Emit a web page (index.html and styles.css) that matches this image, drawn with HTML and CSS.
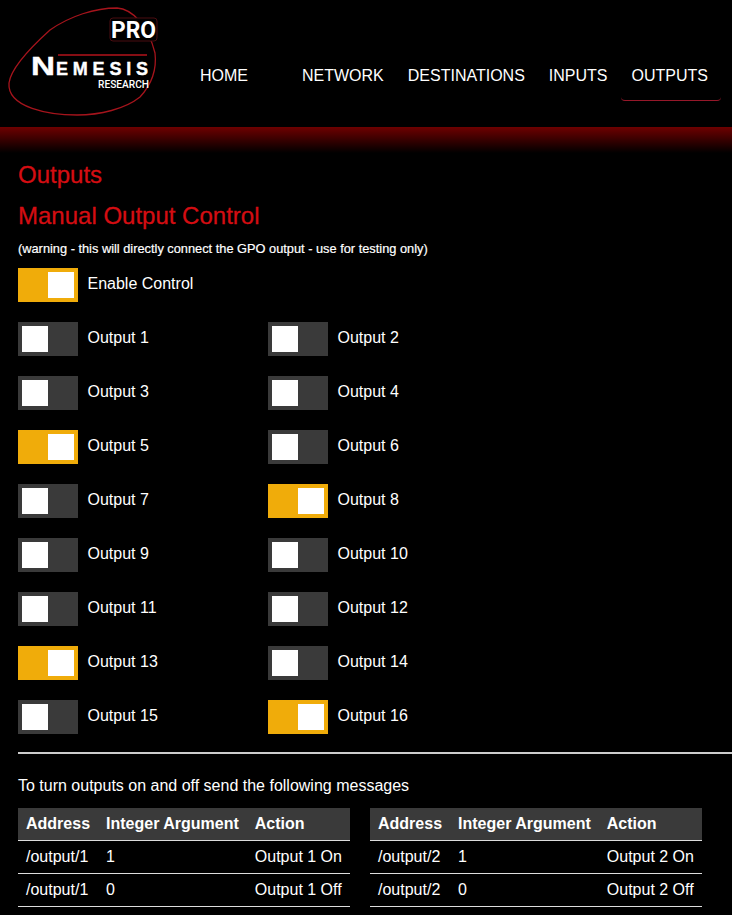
FILE: index.html
```html
<html lang="en">
  <head>
    <meta charset="UTF-8" />
    <meta name="viewport" content="width=device-width, initial-scale=1.0" />
    <title>Outputs</title>
    <link rel="stylesheet" href="styles.css">
  </head>
  <body>
    <header class="header">
      <svg class="logo" width="170" height="125" viewBox="0 0 170 125">
        <path class="logo-blob" d="M9 83C11 68 30 48 50 30C70 16 95 8 117 8C132 9 148 25 155 53C157 70 151 85 140 97C125 109 100 115 77 115C50 115 7 108 9 83Z" />
        <rect class="logo-pro-box" x="110" y="18" width="47" height="23" rx="3" />
        <text class="logo-pro" x="111" y="38" textLength="45" lengthAdjust="spacingAndGlyphs">PRO</text>
        <line class="logo-rule" x1="58" y1="55" x2="147" y2="55" />
        <text class="logo-name logo-name-cap" x="31" y="75" textLength="24" lengthAdjust="spacingAndGlyphs">N</text>
        <text class="logo-name" x="56" y="75" textLength="92">EMESIS</text>
        <text class="logo-sub" x="98" y="88" textLength="51" lengthAdjust="spacingAndGlyphs">RESEARCH</text>
      </svg>
      <nav class="nav">
        <a class="nav-item nav-home">HOME</a>
        <a class="nav-item">NETWORK</a>
        <a class="nav-item">DESTINATIONS</a>
        <a class="nav-item">INPUTS</a>
        <a class="nav-item nav-active">OUTPUTS</a>
      </nav>
    </header>
    <div class="banner"></div>
    <main class="content">
      <h2 class="title">Outputs</h2>
      <h2 class="title subtitle">Manual Output Control</h2>
      <p class="warning">(warning - this will directly connect the GPO output - use for testing only)</p>
      <div class="control enable">
        <span class="switch on"><span class="knob"></span></span>
        <span class="label">Enable Control</span>
      </div>
      <div class="outputs">
        <div class="control"><span class="switch"><span class="knob"></span></span><span class="label">Output 1</span></div>
        <div class="control"><span class="switch"><span class="knob"></span></span><span class="label">Output 2</span></div>
        <div class="control"><span class="switch"><span class="knob"></span></span><span class="label">Output 3</span></div>
        <div class="control"><span class="switch"><span class="knob"></span></span><span class="label">Output 4</span></div>
        <div class="control"><span class="switch on"><span class="knob"></span></span><span class="label">Output 5</span></div>
        <div class="control"><span class="switch"><span class="knob"></span></span><span class="label">Output 6</span></div>
        <div class="control"><span class="switch"><span class="knob"></span></span><span class="label">Output 7</span></div>
        <div class="control"><span class="switch on"><span class="knob"></span></span><span class="label">Output 8</span></div>
        <div class="control"><span class="switch"><span class="knob"></span></span><span class="label">Output 9</span></div>
        <div class="control"><span class="switch"><span class="knob"></span></span><span class="label">Output 10</span></div>
        <div class="control"><span class="switch"><span class="knob"></span></span><span class="label">Output 11</span></div>
        <div class="control"><span class="switch"><span class="knob"></span></span><span class="label">Output 12</span></div>
        <div class="control"><span class="switch on"><span class="knob"></span></span><span class="label">Output 13</span></div>
        <div class="control"><span class="switch"><span class="knob"></span></span><span class="label">Output 14</span></div>
        <div class="control"><span class="switch"><span class="knob"></span></span><span class="label">Output 15</span></div>
        <div class="control"><span class="switch on"><span class="knob"></span></span><span class="label">Output 16</span></div>
      </div>
      <hr class="divider" />
      <p class="intro">To turn outputs on and off send the following messages</p>
      <div class="tables">
        <table class="messages">
          <tr><th>Address</th><th>Integer Argument</th><th>Action</th></tr>
          <tr><td>/output/1</td><td>1</td><td>Output 1 On</td></tr>
          <tr><td>/output/1</td><td>0</td><td>Output 1 Off</td></tr>
        </table>
        <table class="messages">
          <tr><th>Address</th><th>Integer Argument</th><th>Action</th></tr>
          <tr><td>/output/2</td><td>1</td><td>Output 2 On</td></tr>
          <tr><td>/output/2</td><td>0</td><td>Output 2 Off</td></tr>
        </table>
      </div>
    </main>
  </body>
</html>
```

FILE: styles.css
```css
html,
body {
  height: 915px;
  overflow: hidden;
}

body {
  margin: 0;
  background-color: #000;
  color: #fff;
  font-family: "Liberation Sans", Arial, sans-serif;
  font-size: 16px;
}

.header {
  height: 127px;
  display: flex;
}

.logo {
  flex: none;
  width: 170px;
  height: 125px;
  margin-right: 19px;
}

.logo-blob {
  fill: none;
  stroke: #a5141c;
  stroke-width: 1.3;
}

.logo-pro-box {
  fill: #000;
  stroke: #4a0d10;
}

.logo-pro {
  fill: #fff;
  font-family: "Roboto", sans-serif;
  font-weight: 700;
  font-size: 23px;
}

.logo-rule {
  stroke: #b3131b;
  stroke-width: 1.3;
}

.logo-name {
  fill: #fff;
  stroke: #fff;
  stroke-width: 0.4;
  font-family: "Liberation Sans", sans-serif;
  font-weight: 700;
  font-size: 18px;
}

.logo-name-cap {
  font-size: 26px;
}

.logo-sub {
  fill: #fff;
  font-family: "Roboto", sans-serif;
  font-weight: 500;
  font-size: 11px;
}

.nav {
  display: flex;
  align-items: flex-start;
  padding-top: 50px;
}

.nav-item {
  height: 51px;
  box-sizing: border-box;
  padding: 17px 12px 0;
  line-height: 18px;
  white-space: nowrap;
}

.nav-home {
  width: 101px;
  padding-left: 11px;
}

.nav-active {
  width: 100px;
  margin-left: 1px;
  padding-left: 11px;
  border-bottom: 1px solid #96182a;
  border-radius: 0 0 4px 4px;
}

.banner {
  height: 26px;
  background: linear-gradient(#6e0000, #000);
}

.content {
  padding-left: 18px;
}

.title {
  margin: 0;
  padding-top: 8px;
  height: 35px;
  color: #d40d12;
  font-size: 24px;
  font-weight: 400;
  line-height: 28px;
  -webkit-text-stroke: 0.3px #d40d12;
}

.subtitle {
  padding-top: 6px;
}

.warning {
  margin: 0;
  padding-top: 5px;
  height: 19px;
  font-size: 12.8px;
  line-height: 14px;
  -webkit-text-stroke: 0.2px #fff;
}

.control {
  height: 34px;
  display: flex;
  align-items: center;
  gap: 9.5px;
}

.label {
  margin-bottom: 2px;
}

.enable {
  margin-top: 7px;
}

.switch {
  width: 60px;
  height: 34px;
  padding: 4px;
  box-sizing: border-box;
  display: flex;
  background-color: #3a3a3a;
}

.switch.on {
  justify-content: flex-end;
  background-color: #f0ac0a;
}

.knob {
  width: 26px;
  height: 26px;
  background-color: #fff;
}

.outputs {
  display: grid;
  grid-template-columns: 250px 250px;
  row-gap: 20px;
  margin-top: 20px;
}

.divider {
  margin: 18px 0 0;
  height: 2px;
  border: none;
  background-color: #ccc;
}

.intro {
  margin: 0;
  padding-top: 23px;
  height: 31px;
  line-height: 18px;
}

.tables {
  display: flex;
  gap: 20px;
}

.messages {
  width: 332px;
  border-collapse: collapse;
}

.messages th,
.messages td {
  padding: 0 8px;
  height: 33px;
  box-sizing: border-box;
  text-align: left;
  border-bottom: 1px solid #ddd;
  white-space: nowrap;
}

.messages th {
  height: 32px;
  background-color: #3a3a3a;
}
```
